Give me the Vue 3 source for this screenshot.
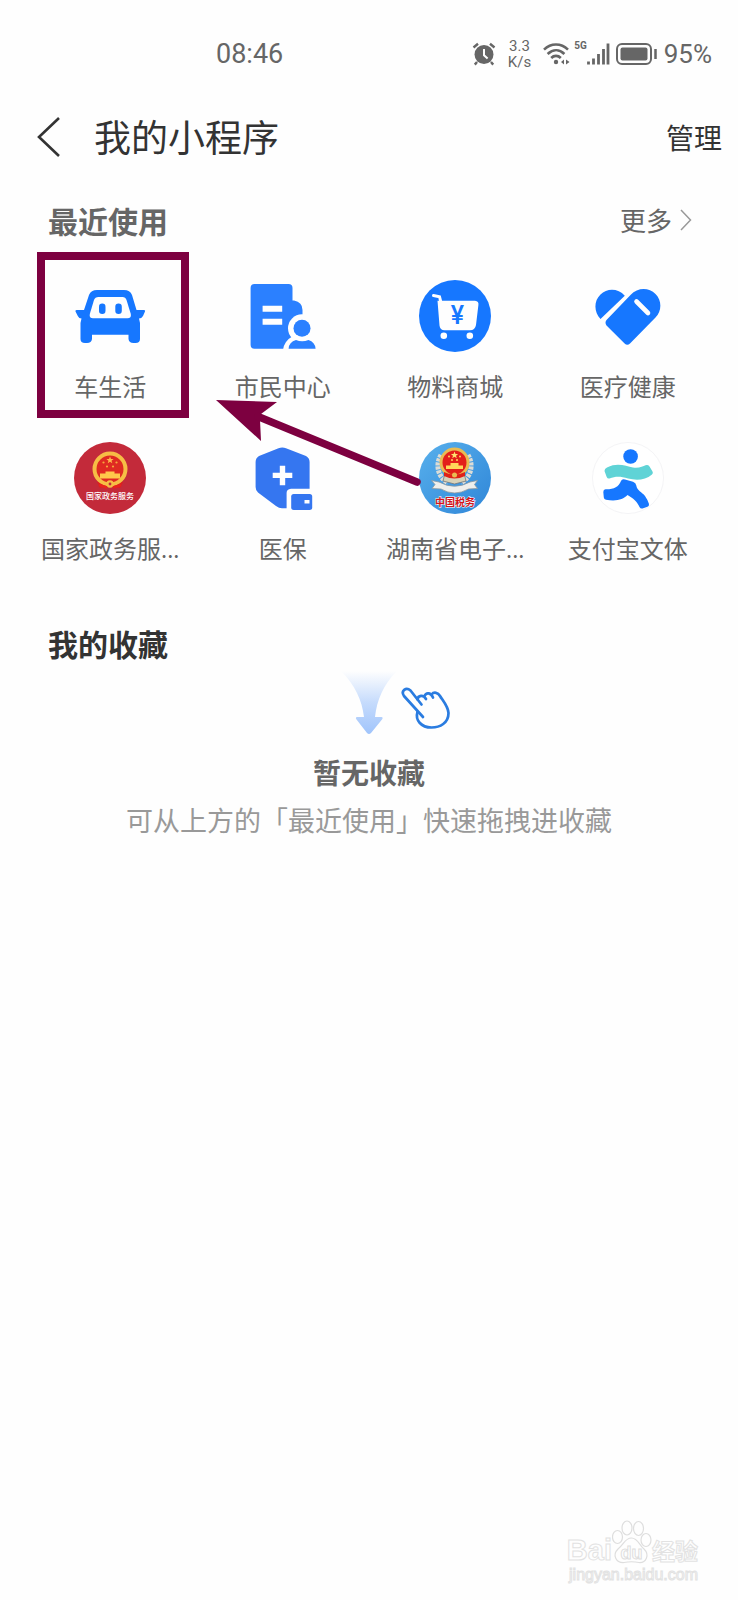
<template>
	<div class="page">
		<div class="status-bar">
			<span class="status-time">08:46</span>
			<div class="status-right">
				<svg class="status-alarm" width="24" height="24" viewBox="0 0 24 24">
					<circle cx="12" cy="12.5" r="9.5" fill="#666" />
					<path d="M1.5 5.5L6 1.8M22.5 5.5L18 1.8M5 20L2.8 22.6M19 20L21.2 22.6" stroke="#666" stroke-width="2.4" />
					<path d="M12 7v6.2l3.6 3.4" fill="none" stroke="#fefefe" stroke-width="2" />
				</svg>
				<span class="status-speed">3.3<br />K/s</span>
				<svg class="status-wifi" width="27" height="24" viewBox="0 0 27 24">
					<g fill="none" stroke="#666" stroke-width="2.6">
						<path d="M1 7.6C8 .8 18 .8 25 7.6" />
						<path d="M4.6 12C10 7 16.4 7 21.4 12" />
						<path d="M8.2 16C11 13.2 15 13.2 17.8 16" />
					</g>
					<circle cx="13" cy="20" r="2.2" fill="#666" />
					<path d="M21 17.5v5l-3-2.5zM23 17.5v5l3.5-2.5z" fill="#666" />
				</svg>
				<span class="status-net">5G</span>
				<svg class="status-signal" width="23" height="22" viewBox="0 0 23 22">
					<path
						d="M1.5 18.5v3M6.5 15.5v6M11.5 11v10.5M16.5 6v15.5M21 .5v21"
						stroke="#666"
						stroke-width="2.8"
					/>
				</svg>
				<svg class="status-battery" width="42" height="22" viewBox="0 0 42 22">
					<rect x="1" y="1" width="34" height="20" rx="5" fill="none" stroke="#666" stroke-width="2" />
					<rect x="4.5" y="4.5" width="27" height="13" rx="2" fill="#666" />
					<path d="M39.5 6v10" stroke="#666" stroke-width="2.5" />
				</svg>
				<span class="status-percent">95%</span>
			</div>
		</div>

		<header class="nav">
			<button class="nav-back" type="button" aria-label="返回">
				<svg width="24" height="40" viewBox="0 0 24 40">
					<path d="M23 1L3 20l20 19" fill="none" stroke="#333" stroke-width="2.6" />
				</svg>
			</button>
			<h1 class="nav-title">我的小程序</h1>
			<button class="nav-manage" type="button">管理</button>
		</header>

		<section class="recent">
			<div class="section-head">
				<h2 class="section-title is-grey">最近使用</h2>
				<a class="more" href="#">
					更多
					<svg width="12" height="22" viewBox="0 0 12 22">
						<path d="M1 1l9.5 10L1 21" fill="none" stroke="#999" stroke-width="1.5" />
					</svg>
				</a>
			</div>

			<div class="grid">
				<a v-for="item in apps" :key="item.id" class="app" href="#">
					<svg v-if="item.id === 'car'" class="app-icon" viewBox="0 0 72 72">
						<path
							fill="#1677ff"
							d="M23 10H50Q56 10 58 15L62.5 30H70Q71.7 30 71 31.5L69 36Q67.5 38.5 65 38.5L66 43V59Q66 63 61.5 63H59.5Q55 63 54.5 59V54.7H18V59Q17.5 63 13 63H11Q6.5 63 6.5 59V43L7.5 38.5Q5 38.5 3.8 36L1.5 31.5Q1 30 2.5 30H10L15 15Q17 10 23 10Z"
						/>
						<path
							fill="#fefefe"
							d="M24.5 17H48.5Q51.5 17 52.5 20L56.8 34Q57.5 38.3 53.5 38.3H19Q15 38.3 15.8 34L20 20Q21 17 24.5 17Z"
						/>
						<rect x="25" y="23.5" width="6.5" height="10.5" rx="3.2" fill="#1677ff" />
						<rect x="41.3" y="23.5" width="6.5" height="10.5" rx="3.2" fill="#1677ff" />
					</svg>

					<svg v-else-if="item.id === 'citizen'" class="app-icon" viewBox="0 0 72 72">
						<path
							fill="#2b80ff"
							d="M7.5 4H41.5Q45.5 4 45.5 8V20.5H47Q55.5 22 55.5 30V50L38 68.7H7.5Q3.6 68.7 3.6 64.7V8Q3.6 4 7.5 4Z"
						/>
						<path d="M15.6 25.7h19.6v6H15.6zM15.6 38.7h19.6v6H15.6z" fill="#fefefe" />
						<circle cx="55" cy="48.3" r="14" fill="#fefefe" />
						<path d="M36 70Q37 61 46 56H66V70Z" fill="#fefefe" />
						<circle cx="55" cy="48.3" r="8.5" fill="#2b80ff" />
						<path d="M41.6 68.7Q42 62 49 60Q55 62.5 61.5 60Q68 62 68.6 68.7Z" fill="#2b80ff" />
					</svg>

					<svg v-else-if="item.id === 'mall'" class="app-icon" viewBox="0 0 72 72">
						<circle cx="36" cy="36" r="36" fill="#1677ff" />
						<path d="M14.5 15.5l6 1.2 1.5 6" fill="none" stroke="#fefefe" stroke-width="3" stroke-linecap="round" />
						<path
							d="M18.5 20.7H56Q60 21 59.4 25L57 45Q56 50.3 51 50.3H25.5Q21 50 20.5 45.5Z"
							fill="#fefefe"
						/>
						<circle cx="24.8" cy="55.7" r="3.3" fill="#fefefe" />
						<circle cx="50.8" cy="55.7" r="3.3" fill="#fefefe" />
						<text class="yen" x="38.5" y="44">¥</text>
					</svg>

					<svg v-else-if="item.id === 'health'" class="app-icon" viewBox="0 0 72 72">
						<path d="M32.8 15.7L8.5 39C2 32 1.5 21 8.5 14.5C15 8 26 8 32.8 15.7Z" fill="#1677ff" />
						<path
							d="M38.5 15C46 7 57 7.5 63.5 14C70 20.5 70 31 63.5 37.5L38 63.5Q35.3 66 32.6 63.5L14.5 45.5Q12.5 42.5 14.5 40Z"
							fill="#1677ff"
						/>
						<path d="M44.5 21.5L56 33" stroke="#fefefe" stroke-width="4.6" stroke-linecap="round" />
					</svg>

					<svg v-else-if="item.id === 'gov'" class="app-icon" viewBox="0 0 72 72">
						<circle cx="36" cy="36" r="36" fill="#c32a3a" />
						<path d="M23 40l3 6 10-3 10 3 3-6z" fill="#dc1f20" />
						<circle cx="36" cy="27" r="15.5" fill="#df2a22" stroke="#f6bd45" stroke-width="4" />
						<path d="M36 14.5l1 2.5h2.6l-2.1 1.7.8 2.6-2.3-1.5-2.3 1.5.8-2.6-2.1-1.7H35z" fill="#ffb84d" />
						<g fill="#f6a83d">
							<circle cx="29.5" cy="20.5" r="1.1" />
							<circle cx="42.5" cy="20.5" r="1.1" />
							<circle cx="33" cy="24.5" r="1.1" />
							<circle cx="39" cy="24.5" r="1.1" />
						</g>
						<path d="M31.5 29.5h9v2h5.5v5H26v-5h5.5z" fill="#ffc94a" />
						<circle cx="36" cy="42" r="3.8" fill="#f6bd45" />
						<circle cx="36" cy="42" r="1.4" fill="#c32a3a" />
						<path d="M25 43l8 2.5M47 43l-8 2.5" stroke="#e8221c" stroke-width="2.5" />
						<text class="gov-text" x="36" y="57">国家政务服务</text>
					</svg>

					<svg v-else-if="item.id === 'insurance'" class="app-icon" viewBox="0 0 72 72">
						<path
							fill="#3576f0"
							d="M31.5 6.3Q35.3 4.5 39 6.3L59 14Q62.6 16 62.6 20V46.7H44Q39.6 47 39.6 51V66.3H35Q32 66.3 29 64L11 50.5Q8.6 48.5 8.6 45V20Q8.6 16 12 14Z"
						/>
						<path d="M35.5 23.7v19.6M25.7 33.4h19.6" stroke="#fefefe" stroke-width="5.4" />
						<rect x="44.2" y="52" width="21" height="16" rx="2.5" fill="#3576f0" />
						<rect x="57.5" y="58" width="5" height="3.5" fill="#fefefe" />
					</svg>

					<svg v-else-if="item.id === 'tax'" class="app-icon" viewBox="0 0 72 72">
						<defs>
							<linearGradient id="taxSky" x1="0" y1="0" x2="1" y2="1">
								<stop offset="0" stop-color="#58b0ec" />
								<stop offset="1" stop-color="#2f86d8" />
							</linearGradient>
						</defs>
						<circle cx="36" cy="36" r="36" fill="url(#taxSky)" />
						<path
							d="M22 13C16 23 19 35 29 41M49 13C55 23 52 35 42 41"
							fill="none"
							stroke="#dcdcd6"
							stroke-width="5"
							stroke-dasharray="3 1"
						/>
						<path d="M26 31l-2 8 11.5 3 11.5-3-2-8z" fill="#d8d2b8" stroke="#777" stroke-width=".8" />
						<path
							d="M12.5 38.5l7.5 1.5Q35.5 48.5 51 40l7.5-1.5-3 4 3 4-9 .5Q35.5 55 22 47l-9-.5 3-4z"
							fill="#efefec"
							stroke="#8c98a0"
							stroke-width=".8"
						/>
						<circle cx="35.5" cy="20.5" r="13.5" fill="#e31f1a" stroke="#e9bb52" stroke-width="3" />
						<path d="M35.5 9.5l1 2.5h2.6L37 13.7l.8 2.6-2.3-1.5-2.3 1.5.8-2.6-2.1-1.7h2.6z" fill="#ffe36e" />
						<g fill="#ffd75a">
							<circle cx="30" cy="14.5" r="1" />
							<circle cx="41" cy="14.5" r="1" />
							<circle cx="33" cy="18" r="1" />
							<circle cx="38" cy="18" r="1" />
							<path d="M31.5 21h8v2.5h4.5V27H27v-3.5h4.5z" />
						</g>
						<path d="M25 30q10.5 5 21 0v4q-10.5 5-21 0z" fill="#df2118" />
						<circle cx="35.5" cy="33" r="2.5" fill="#e9bb52" />
						<text class="tax-text" x="36" y="64">中国税务</text>
					</svg>

					<svg v-else class="app-icon" viewBox="0 0 72 72">
						<circle cx="36" cy="36" r="35.5" fill="#fff" stroke="#f4f4f6" />
						<circle cx="38.6" cy="14.5" r="7.3" fill="#1677ff" />
						<path
							fill="#5fd3d6"
							d="M15 25.5C26 20 34 24.5 41 25.5C47 26.3 51 24.5 53.5 23.3Q56 22.5 57.5 24.5L60.5 29.5Q61.5 31 60 32.5C53 38.5 44 38.5 36 36.5C29 34.5 24 34 17.5 36.5Q15.5 37 14.7 35L12.5 29Q12.3 26.8 15 25.5Z"
						/>
						<path
							fill="#1677ff"
							d="M29 39Q30 36.5 33 37.5L41 39.8Q44 41 44.3 43.5C45 48.5 50 50 53 54Q55.5 57.5 57 62Q57.3 64 55.5 64.7L50.5 66.5Q48.5 67 47.5 65C45.5 60 41 56 35.5 53C31 57.5 25 59.5 14 57.8Q12 57.5 11.8 55.5L11.3 50Q11.3 47.5 13.5 47.3C22 47.5 26.5 45 29 39Z"
						/>
					</svg>

					<span class="app-name">{{ item.name }}<span v-if="item.cut" class="app-dots">...</span></span>
					<span v-if="item.marked" class="mark"></span>
				</a>

				<svg class="pointer" width="208" height="90" viewBox="0 0 208 90">
					<path d="M0 0L61 2 45 14 44 20 45 41Z" fill="#7d0040" />
					<path d="M42 16.5L201 82" stroke="#7d0040" stroke-width="7.5" stroke-linecap="round" />
				</svg>
			</div>
		</section>

		<section class="favorites">
			<h2 class="section-title">我的收藏</h2>
			<div class="empty">
				<svg width="168" height="64" viewBox="0 0 168 64">
					<defs>
						<linearGradient id="dropFade" x1="0" y1="0" x2="0" y2="1">
							<stop offset="0" stop-color="#a0c4fb" stop-opacity="0" />
							<stop offset=".5" stop-color="#a0c4fb" stop-opacity=".6" />
							<stop offset="1" stop-color="#a0c4fb" />
						</linearGradient>
					</defs>
					<path
						d="M56 0H112C98 14 92 29 90 46H96.5Q98.5 46.5 97 48.5L86 62Q84 64 82 62L71.5 48.5Q70 46.5 72 46H79C77 29 70 14 56 0Z"
						fill="url(#dropFade)"
					/>
					<g fill="none" stroke="#2a7ce0" stroke-width="2.7" stroke-linecap="round" stroke-linejoin="round">
						<path d="M138 46L119 25C115.5 20 121 15.5 125.5 19.5L136.5 33.5" />
						<path d="M132.5 28.5C133 24 138.5 23.5 141 28" />
						<path d="M139.5 25C141.5 20.5 146 22 148 26.5" />
						<path
							d="M146.5 23.5C149 20.5 153 21.5 155 25C158 30 163 35 163.5 42C163.5 52 155 56.5 146.5 56.5C136 56.5 130 49 132.5 41"
						/>
					</g>
				</svg>
				<p class="empty-title">暂无收藏</p>
				<p class="empty-hint">可从上方的「最近使用」快速拖拽进收藏</p>
			</div>
		</section>

		<footer class="watermark">
			<div class="watermark-logo">
				<span class="watermark-bai">Bai</span>
				<svg width="40" height="44" viewBox="0 0 40 44">
					<g fill="#fefefe" stroke="#dedede" stroke-width="1.2">
						<ellipse cx="5.5" cy="17" rx="5" ry="6.5" />
						<ellipse cx="15" cy="8" rx="5" ry="7" />
						<ellipse cx="26.5" cy="8.5" rx="5" ry="7" />
						<ellipse cx="34" cy="20" rx="5" ry="6.5" />
						<path d="M19.5 18C26 18 27 25 32 29C38 35 34 43 27 42.5C22 41.5 17 41.5 12 42.5C4 43 0 35 6 29C12 24 13 18 19.5 18Z" />
					</g>
					<text class="watermark-du" x="19.5" y="39">du</text>
				</svg>
				<span class="watermark-jy">经验</span>
			</div>
			<span class="watermark-url">jingyan.baidu.com</span>
		</footer>
	</div>
</template>

<script setup>
	import { ref } from 'vue'

	// cut: 名称过长，末尾显示省略号
	const apps = ref([
		{ id: 'car', name: '车生活', marked: true },
		{ id: 'citizen', name: '市民中心' },
		{ id: 'mall', name: '物料商城' },
		{ id: 'health', name: '医疗健康' },
		{ id: 'gov', name: '国家政务服', cut: true },
		{ id: 'insurance', name: '医保' },
		{ id: 'tax', name: '湖南省电子', cut: true },
		{ id: 'sport', name: '支付宝文体' }
	])
</script>

<style>
	body {
		margin: 0;
		background: #fefefe;
	}
</style>

<style scoped>
	.page {
		display: flex;
		flex-direction: column;
		min-height: 100vh;
		font-family: 'Noto Sans CJK SC', sans-serif;
		color: #333;
	}
	h1,
	h2,
	p {
		margin: 0;
	}
	a {
		color: inherit;
		text-decoration: none;
	}
	button {
		padding: 0;
		border: 0;
		background: none;
		font-family: inherit;
		color: inherit;
		cursor: pointer;
	}
	svg {
		display: block;
		flex-shrink: 0;
	}

	/* 状态栏 */
	.status-bar {
		display: flex;
		align-items: center;
		justify-content: space-between;
		height: 108px;
		padding: 0 26px 0 216px;
		font-family: Roboto, sans-serif;
		color: #666;
	}
	.status-time {
		font-size: 27px;
	}
	.status-right {
		display: flex;
		align-items: center;
	}
	.status-speed {
		margin-left: 12px;
		font-size: 15px;
		line-height: 16px;
		text-align: center;
	}
	.status-wifi {
		margin-left: 12px;
	}
	.status-net {
		align-self: flex-start;
		margin: 2px 0 0 4px;
		font-size: 10px;
		line-height: 12px;
		font-weight: 700;
	}
	.status-battery {
		margin: 0 6px;
	}
	.status-percent {
		font-size: 26px;
	}

	/* 导航栏 */
	.nav {
		display: flex;
		align-items: center;
		height: 58px;
		padding: 0 16px 0 36px;
	}
	.nav-title {
		flex: 1;
		margin-left: 34px;
		padding-bottom: 2px;
		font-size: 37px;
		line-height: 56px;
		font-weight: 400;
	}
	.nav-manage {
		font-size: 28px;
		line-height: 56px;
	}

	.recent {
		padding: 29px 24px 0;
	}
	.section-head {
		display: flex;
		align-items: center;
		justify-content: space-between;
		padding: 0 22px 0 24px;
	}
	.section-title {
		font-size: 30px;
		line-height: 50px;
		font-weight: 700;
	}
	.is-grey {
		color: #666;
	}
	.more {
		display: flex;
		align-items: center;
		gap: 8px;
		font-size: 26px;
		line-height: 50px;
		color: #666;
	}

	.grid {
		position: relative;
		display: grid;
		grid-template-columns: repeat(4, 1fr);
		margin-top: 7px;
	}
	.app {
		position: relative;
		display: flex;
		flex-direction: column;
		align-items: center;
		padding: 28px 0 10px;
	}
	.app-icon {
		width: 72px;
		height: 72px;
	}
	.app-name {
		margin-top: 16px;
		font-size: 24px;
		line-height: 36px;
		color: #666;
		white-space: nowrap;
	}
	.app-dots {
		font-size: 22px;
	}
	.yen {
		font: 500 25px Roboto, sans-serif;
		fill: #1677ff;
		text-anchor: middle;
	}
	.gov-text {
		font-size: 8px;
		font-weight: 500;
		fill: #fff;
		text-anchor: middle;
	}
	.tax-text {
		font-size: 10px;
		font-weight: 700;
		fill: #d3151b;
		stroke: #fff;
		stroke-width: 1px;
		paint-order: stroke;
		text-anchor: middle;
	}

	/* 红框和箭头标注 */
	.mark {
		position: absolute;
		top: 0;
		right: 8px;
		bottom: -4px;
		left: 13px;
		border: 8px solid #7d0040;
	}
	.pointer {
		position: absolute;
		top: 148px;
		left: 192px;
		pointer-events: none;
	}

	/* 收藏 */
	.favorites {
		padding: 42px 48px 0;
	}
	.empty {
		display: flex;
		flex-direction: column;
		align-items: center;
		padding-top: 3px;
	}
	.empty-title {
		margin-top: 17px;
		font-size: 28px;
		line-height: 40px;
		font-weight: 700;
		color: #666;
	}
	.empty-hint {
		margin-top: 8px;
		font-size: 27px;
		line-height: 40px;
		color: #999;
		white-space: nowrap;
	}

	.watermark {
		display: flex;
		flex-direction: column;
		align-items: flex-end;
		margin-top: auto;
		padding: 0 40px 14px 0;
		color: #fefefe;
		-webkit-text-stroke: 1px #e2e2e2;
	}
	.watermark-logo {
		display: flex;
		align-items: flex-end;
	}
	.watermark-bai {
		font: 700 29px/28px 'Liberation Sans', sans-serif;
	}
	.watermark-du {
		font: 700 18px 'Liberation Sans', sans-serif;
		fill: #fefefe;
		stroke: #dedede;
		stroke-width: 1px;
		text-anchor: middle;
	}
	.watermark-jy {
		font-size: 23px;
		line-height: 28px;
		font-weight: 700;
	}
	.watermark-url {
		font: 16px/22px 'Liberation Sans', sans-serif;
	}
</style>
